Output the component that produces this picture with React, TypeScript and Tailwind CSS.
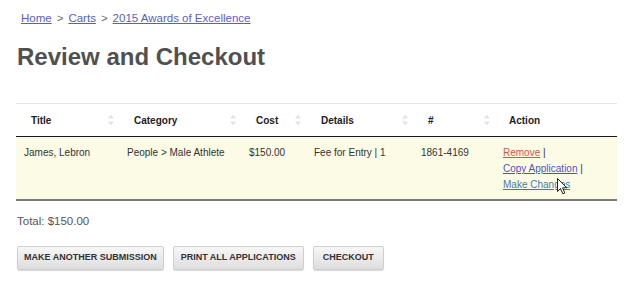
import React from "react";

const SortIcon = () => (
  <svg width="6" height="11" viewBox="0 0 6 11" className="absolute right-[5px] top-1/2 -translate-y-1/2">
    <path d="M3 0 L6 4 L0 4 Z" fill="#e3e3e3" />
    <path d="M3 11 L6 7 L0 7 Z" fill="#e3e3e3" />
  </svg>
);

const Th = ({ children, w }: { children: React.ReactNode; w: string }) => (
  <th className={`relative ${w} pl-[15px] text-left font-bold text-[10px] text-[#222] h-[33px] align-middle`}>
    {children}
    <SortIcon />
  </th>
);

const Td = ({ children }: { children: React.ReactNode }) => (
  <td className="align-top pl-[8px] pt-[8px] pb-[6px] text-[10px] leading-[16px] text-[#333]">{children}</td>
);

const Btn = ({ children, cls }: { children: React.ReactNode; cls: string }) => (
  <button className={`h-[24px] ${cls} rounded-[2px] border border-[#cfcfcf] bg-gradient-to-b from-[#f7f7f7] to-[#dedede] shadow-[0_1px_1px_rgba(0,0,0,0.15)] text-[9px] font-bold text-[#333]`}>
    {children}
  </button>
);

export default function App() {
  return (
    <div className="relative w-[629px] h-[288px] bg-white overflow-hidden" style={{ fontFamily: '"Liberation Sans", Arial, sans-serif' }}>
      <div className="pl-[16px] pr-[12px]">
        <div className="pt-[10px] pl-[5px] text-[11.5px] leading-[16px] text-[#666]">
          <a className="underline text-[#5c5ccc]">Home</a>
          <span className="mx-[5px]">&gt;</span>
          <a className="underline text-[#5c5ccc]">Carts</a>
          <span className="mx-[5px]">&gt;</span>
          <a className="underline text-[#5c5ccc]">2015 Awards of Excellence</a>
        </div>
        <h1 className="mt-[17px] pl-[1px] text-[24px] leading-[28px] font-bold text-[#505050]">Review and Checkout</h1>
        <table className="mt-[32px] w-[601px] table-fixed border-collapse">
          <thead>
            <tr className="border-t border-[#e6e6e6] border-b border-b-[#1a1a1a]">
              <Th w="w-[103px]">Title</Th>
              <Th w="w-[122px]">Category</Th>
              <Th w="w-[65px]">Cost</Th>
              <Th w="w-[107px]">Details</Th>
              <Th w="w-[82px]">#</Th>
              <th className="w-[122px] pl-[14px] text-left font-bold text-[10px] text-[#222] align-middle">Action</th>
            </tr>
          </thead>
          <tbody>
            <tr className="bg-[#fbfbe6] border-b-2 border-b-[#7a7a7a]">
              <Td>James, Lebron</Td>
              <Td>People &gt; Male Athlete</Td>
              <Td>$150.00</Td>
              <Td>Fee for Entry | 1</Td>
              <Td>1861-4169</Td>
              <Td>
                <div><a className="underline text-[#d9534a]">Remove</a> |</div>
                <div><a className="underline text-[#5252c8]">Copy Application</a> |</div>
                <div><a className="underline text-[#3f7bb0]">Make Changes</a></div>
              </Td>
            </tr>
          </tbody>
        </table>
        <div className="mt-[12px] pl-[1px] text-[11.5px] leading-[16px] text-[#555]">Total: $150.00</div>
        <div className="mt-[17px] pl-[1px] flex gap-[8px]">
          <Btn cls="px-[6px]">MAKE ANOTHER SUBMISSION</Btn>
          <Btn cls="px-[7px] ml-[1px]">PRINT ALL APPLICATIONS</Btn>
          <Btn cls="px-[9px] ml-[1px]">CHECKOUT</Btn>
        </div>
      </div>
      <svg width="12" height="18" viewBox="0 0 12 18" className="absolute left-[557px] top-[178px]">
        <path d="M0.5 0.5 L0.5 13.5 L3.5 10.5 L5.8 15.8 L7.8 15 L5.6 9.8 L9.8 9.8 Z" fill="#fff" stroke="#222" strokeWidth="1" strokeLinejoin="round" />
      </svg>
    </div>
  );
}
